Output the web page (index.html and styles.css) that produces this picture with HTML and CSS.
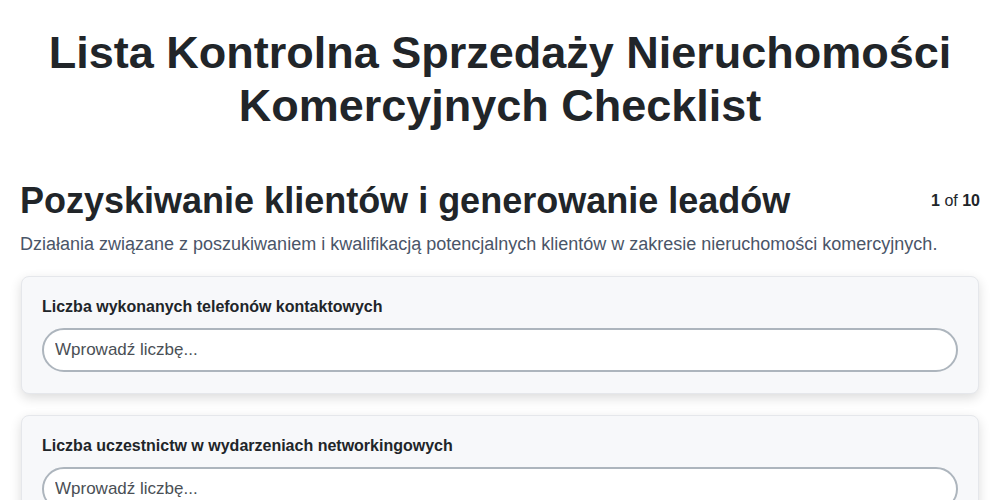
FILE: index.html
```html
<!DOCTYPE html>
<html lang="pl">
<head>
<meta charset="UTF-8">
<title>Lista Kontrolna Sprzedaży Nieruchomości Komercyjnych Checklist</title>
<meta name="viewport" content="width=device-width, initial-scale=1.0">
<link rel="stylesheet" href="styles.css">
</head>
<body>

<h1 class="page-title">Lista Kontrolna Sprzedaży Nieruchomości Komercyjnych Checklist</h1>

<div class="section">
    <div class="section-head">
        <h2>Pozyskiwanie klientów i generowanie leadów</h2>
        <div class="counter"><b>1</b> of <b>10</b></div>
    </div>
    <p class="section-desc">Działania związane z poszukiwaniem i kwalifikacją potencjalnych klientów w zakresie nieruchomości komercyjnych.</p>

    <div class="card">
        <label for="calls">Liczba wykonanych telefonów kontaktowych</label>
        <input type="number" id="calls" placeholder="Wprowadź liczbę...">
    </div>

    <div class="card">
        <label for="events">Liczba uczestnictw w wydarzeniach networkingowych</label>
        <input type="number" id="events" placeholder="Wprowadź liczbę...">
    </div>
</div>

</body>
</html>
```

FILE: styles.css
```css
body {
    font-family: 'Liberation Sans', Arial, sans-serif;
    margin: 0;
    padding: 0 20px;
    background: #fff;
    color: #212529;
}

.page-title {
    font-size: 45px;
    line-height: 53px;
    text-align: center;
    margin: 26px 0 47px 0;
    font-weight: bold;
}

.section-head {
    display: flex;
    justify-content: space-between;
    align-items: center;
}

.section-head h2 {
    font-size: 36px;
    margin: 0;
    line-height: 44px;
}

.counter {
    font-size: 16px;
    color: #212529;
}

.section-desc {
    font-size: 18px;
    color: #4a5568;
    margin: 11px 0 21px 0;
}

.card {
    background: #f7f8fa;
    border: 1px solid #e5e7eb;
    border-radius: 8px;
    box-shadow: 0 4px 12px rgba(0,0,0,0.14);
    padding: 21px 20px 21px 20px;
    margin: 0 1px 21px 1px;
}

.card label {
    display: block;
    font-size: 16px;
    font-weight: bold;
    margin-bottom: 12px;
}

.card input {
    box-sizing: border-box;
    width: 100%;
    height: 44px;
    border: 2px solid #adb5bd;
    border-radius: 22px;
    padding: 0 11px;
    font-size: 17px;
    font-family: inherit;
    background: #fff;
    outline: none;
}

.card input::placeholder {
    color: #4a4f55;
}
```
